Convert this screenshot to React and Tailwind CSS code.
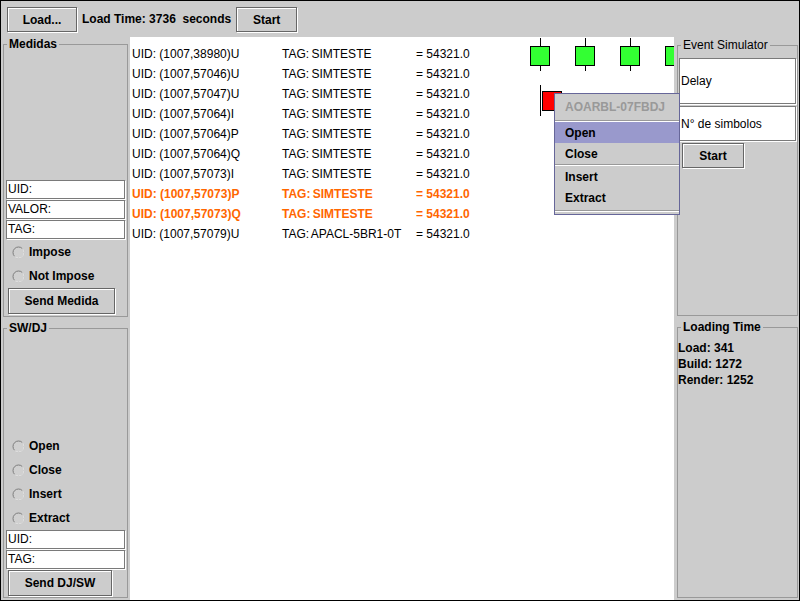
import React from "react";

const btn =
  "h-[25px] border border-[#666666] bg-[#cccccc] shadow-[inset_1px_1px_0_#ffffff,1px_1px_0_#ffffff] font-bold text-[12px] flex items-center justify-center";
const field =
  "h-[19px] border border-[#7a7a7a] bg-white shadow-[1px_1px_0_#ffffff] text-[12px] leading-[17px] pl-[1px]";

function Radio({ label }) {
  return (
    <div className="h-[24px] flex items-center pl-[6px] gap-[4px]">
      <svg width="13" height="13" viewBox="0 0 13 13">
        <circle cx="6.5" cy="6.5" r="5.5" fill="#d0d0d0" stroke="#7d7d7d" />
        <path d="M2.6 10.4 A5.5 5.5 0 0 0 10.4 2.6" stroke="#ffffff" fill="none" />
      </svg>
      <span className="font-bold text-[12px]">{label}</span>
    </div>
  );
}

function Group({ title, bold = true, className = "", innerH, innerClass = "", children }) {
  return (
    <fieldset className={`border border-[#999999] min-w-0 ${className}`}>
      <legend className={`ml-[3px] px-[2px] leading-[14px] text-[12px] ${bold ? "font-bold" : ""}`}>
        {title}
      </legend>
      <div className={`flex flex-col ${innerClass}`} style={{ height: innerH }}>
        {children}
      </div>
    </fieldset>
  );
}

function Node({ left, fill = "#33ff33" }) {
  return (
    <div className="absolute top-[1px] w-[20px]" style={{ left }}>
      <div className="mx-auto w-px h-[8px] bg-black" />
      <div className="w-[20px] h-[20px] border border-black" style={{ background: fill }} />
      <div className="mx-auto w-px h-[5px] bg-black" />
    </div>
  );
}

const rows = [
  ["UID: (1007,38980)U", "SIMTESTE", false],
  ["UID: (1007,57046)U", "SIMTESTE", false],
  ["UID: (1007,57047)U", "SIMTESTE", false],
  ["UID: (1007,57064)I", "SIMTESTE", false],
  ["UID: (1007,57064)P", "SIMTESTE", false],
  ["UID: (1007,57064)Q", "SIMTESTE", false],
  ["UID: (1007,57073)I", "SIMTESTE", false],
  ["UID: (1007,57073)P", "SIMTESTE", true],
  ["UID: (1007,57073)Q", "SIMTESTE", true],
  ["UID: (1007,57079)U", "APACL-5BR1-0T", false],
];

function Sep() {
  return (
    <div className="h-[2px] flex flex-col">
      <div className="h-px bg-[#999999]" />
      <div className="h-px bg-white" />
    </div>
  );
}

export default function App() {
  return (
    <div className="w-[800px] h-[603px] bg-white font-['Liberation_Sans',Arial,sans-serif] text-black">
      <div className="relative h-[601px] border border-black bg-[#cccccc] flex flex-col">
        {/* top bar */}
        <div className="h-[36px] flex items-start pt-[6px] pl-[6px]">
          <button className={`${btn} w-[70px]`}>Load...</button>
          <span className="ml-[5px] font-bold text-[12px] leading-[25px] whitespace-pre">
            Load Time: 3736  seconds
          </span>
          <button className={`${btn} w-[61px] ml-[5px]`}>Start</button>
        </div>

        {/* main */}
        <div className="flex flex-1 min-h-0">
          {/* left column */}
          <div className="w-[129px] flex flex-col">
            <Group title="Medidas" className="ml-[2px] w-[125px]" innerH={265} innerClass="justify-end px-[2px] pb-[2px]">
              <div className={field}>UID:</div>
              <div className={`${field} mt-px`}>VALOR:</div>
              <div className={`${field} mt-px`}>TAG:</div>
              <div className="mt-px">
                <Radio label="Impose" />
                <Radio label="Not Impose" />
              </div>
              <button className={`${btn} h-[26px] w-[107px] ml-[2px]`}>Send Medida</button>
            </Group>
            <Group title="SW/DJ" className="ml-[2px] mt-[4px] w-[125px]" innerH={262} innerClass="justify-end px-[2px] pb-[1px]">
              <Radio label="Open" />
              <Radio label="Close" />
              <Radio label="Insert" />
              <Radio label="Extract" />
              <div className={field}>UID:</div>
              <div className={`${field} mt-px`}>TAG:</div>
              <button className={`${btn} h-[26px] w-[104px] ml-[2px] mt-px`}>Send DJ/SW</button>
            </Group>
          </div>

          {/* center */}
          <div className="relative w-[544px] bg-white overflow-hidden pt-[7px] pl-[2px] text-[12px]">
            {rows.map(([uid, tag, hot], i) => (
              <div
                key={i}
                className={`h-[20px] flex items-center ${hot ? "text-[#ff6600] font-bold" : ""}`}
              >
                <span className="w-[150px] whitespace-pre">{uid}</span>
                <span className="w-[134px] whitespace-pre [word-spacing:-1px]">TAG: {tag}</span>
                <span className="whitespace-pre">= 54321.0</span>
              </div>
            ))}
            <Node left={400} />
            <Node left={445} />
            <Node left={490} />
            <Node left={535} />
            {/* red node */}
            <div className="absolute left-[410px] top-[48px] w-px h-[31px] bg-black" />
            <div className="absolute left-[412px] top-[54px] w-[20px] h-[20px] border border-black bg-[#ff0000]" />
          </div>

          {/* right column */}
          <div className="w-[125px] flex flex-col">
            <Group title="Event Simulator" bold={false} className="ml-[3px] mt-px w-[121px]" innerH={263} innerClass="px-[1px]">
              <div className="mt-[6px] h-[46px] border border-[#7a7a7a] bg-white shadow-[1px_1px_0_#ffffff] flex items-center text-[12px] pl-[1px]">
                Delay
              </div>
              <div className="mt-[2px] h-[35px] border border-[#7a7a7a] bg-white shadow-[1px_1px_0_#ffffff] flex items-center text-[12px] pl-[1px]">
                N° de simbolos
              </div>
              <button className={`${btn} mt-[2px] ml-[3px] w-[62px]`}>Start</button>
            </Group>
            <Group title="Loading Time" className="ml-[3px] mt-[4px] w-[121px]" innerH={263} innerClass="pt-[6px] text-[12px] leading-[16px] font-bold">
              <div>Load: 341</div>
              <div>Build: 1272</div>
              <div>Render: 1252</div>
            </Group>
          </div>
        </div>

        {/* popup menu */}
        <div className="absolute left-[553px] top-[92px] w-[126px] border border-[#666699] bg-[#cccccc] flex flex-col text-[12px] font-bold">
          <div className="h-[26px] flex items-center pl-[10px] text-[#999999]">AOARBL-07FBDJ</div>
          <Sep />
          <div className="h-[21px] flex items-center pl-[10px] bg-[#9999cc]">Open</div>
          <div className="h-[21px] flex items-center pl-[10px]">Close</div>
          <Sep />
          <div className="h-[21px] flex items-center pl-[10px]">Insert</div>
          <div className="h-[21px] flex items-center pl-[10px]">Extract</div>
          <div className="h-[2px]" />
          <Sep />
          <div className="h-[2px]" />
        </div>
      </div>
    </div>
  );
}
